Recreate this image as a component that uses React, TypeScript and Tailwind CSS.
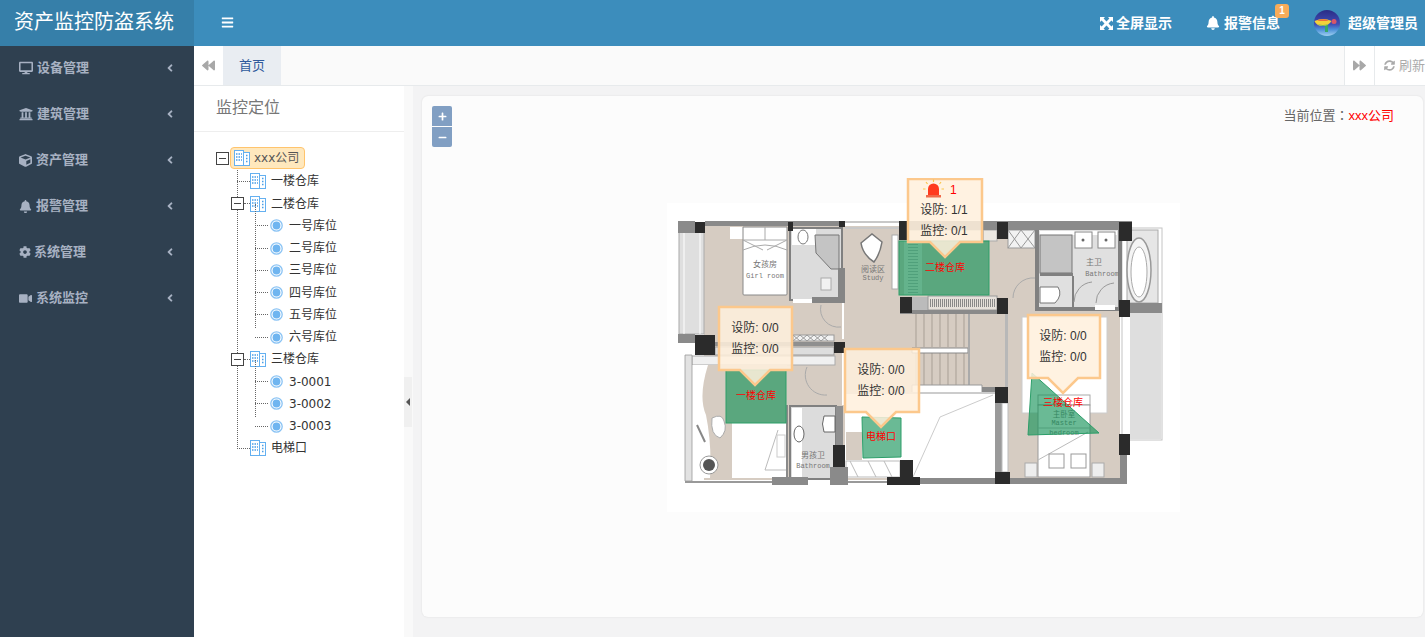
import { FaAngleLeft, FaBackward, FaBars, FaBell, FaCog, FaCube, FaDesktop, FaForward, FaMinus, FaPlus, FaSyncAlt, FaUniversity, FaVideo } from 'react-icons/fa';

const menu = [
  { label: '设备管理', icon: <FaDesktop className="w-[14px] h-[14px]" />, gap: 'ml-[4px]' },
  { label: '建筑管理', icon: <FaUniversity className="w-[14px] h-[14px]" />, gap: 'ml-[4px]' },
  { label: '资产管理', icon: <FaCube className="w-[13px] h-[13px]" />, gap: 'ml-[4px]' },
  { label: '报警管理', icon: <FaBell className="w-[13px] h-[13px]" />, gap: 'ml-[4px]' },
  { label: '系统管理', icon: <FaCog className="w-[12px] h-[12px]" />, gap: 'ml-[3px]' },
  { label: '系统监控', icon: <FaVideo className="w-[13px] h-[13px]" />, gap: 'ml-[4px]' },
];

function BuildingIcon() {
  return (
    <svg width="16" height="16" viewBox="0 0 16 16" fill="none" className="shrink-0">
      <rect x="0.5" y="0.5" width="9" height="15" fill="#fff" stroke="#64b0f0" />
      <rect x="9.5" y="2.5" width="6" height="13" fill="#fff" stroke="#64b0f0" />
      <path d="M2 4h1.500M4.500 4H6M7 4h1M2 7h1.500M4.500 7H6M7 7h1M2 10h1.500M4.500 10H6M7 10h1M12 5.500h1.500M12 8.500h1.500M12 11.500h1.500" stroke="#4a9fe8" strokeWidth="1.500" />
    </svg>
  );
}

function RadioIcon() {
  return (
    <svg width="13" height="13" viewBox="0 0 13 13" className="shrink-0">
      <circle cx="6.500" cy="6.500" r="5.700" fill="#fff" stroke="#8ac3f4" strokeWidth="1.300" />
      <circle cx="6.500" cy="6.500" r="3.900" fill="#6fb5f0" />
    </svg>
  );
}

function SwitchBox({ className }: { className: string }) {
  return (
    <span className={`relative z-10 flex items-center justify-center w-[13px] h-[13px] border border-[#444] bg-white shrink-0 ${className}`}>
      <span className="w-[7px] h-px bg-[#444]" />
    </span>
  );
}

function Leaf({ label }: { label: string }) {
  return (
    <li className="flex items-center h-[22.25px] pl-[39px]">
      <span className="w-[13px] border-t border-dotted border-[#666] mr-[2px]" />
      <RadioIcon />
      <span className="ml-[6px] text-[#333]">{label}</span>
    </li>
  );
}

function Floor({ label, open, children, lineClass }: { label: string; open?: boolean; children?: React.ReactNode; lineClass?: string }) {
  return (
    <li>
      <div className="flex items-center h-[22.25px] pl-[21px]">
        {open ? (
          <>
            <SwitchBox className="-ml-[6px]" />
            <span className="w-[6px] border-t border-dotted border-[#666]" />
          </>
        ) : (
          <span className="w-[13px] border-t border-dotted border-[#666]" />
        )}
        <BuildingIcon />
        <span className="ml-[5px] text-[#333]">{label}</span>
      </div>
      {children && (
        <ul className="relative">
          <span className={`absolute left-[39px] -top-[11px] border-l border-dotted border-[#666] ${lineClass}`} />
          {children}
        </ul>
      )}
    </li>
  );
}

function Tree() {
  return (
    <div className="pl-[22px] pt-[15px] text-[12px] font-['DejaVu_Sans','Noto_Sans_CJK_SC',sans-serif]">
      <div className="flex items-start h-[23.25px]">
        <SwitchBox className="mr-px mt-[5px]" />
        <div className="flex items-center h-[22px] w-[75px] pl-[3px] rounded-[4px] border border-[#ffc46d] bg-[#ffe8bd]">
          <BuildingIcon />
          <span className="ml-[4px] text-[#555]">xxx公司</span>
        </div>
      </div>
      <ul className="relative">
        <span className="absolute left-[21px] top-0 h-[279px] border-l border-dotted border-[#666]" />
        <Floor label="一楼仓库" />
        <Floor label="二楼仓库" open lineClass="h-[124px]">
          {['一号库位', '二号库位', '三号库位', '四号库位', '五号库位', '六号库位'].map((name) => (
            <Leaf key={name} label={name} />
          ))}
        </Floor>
        <Floor label="三楼仓库" open lineClass="h-[57px]">
          {['3-0001', '3-0002', '3-0003'].map((name) => (
            <Leaf key={name} label={name} />
          ))}
        </Floor>
        <Floor label="电梯口" />
      </ul>
    </div>
  );
}

const pillars = [
  [695, 222, 10, 11], [788, 222, 5, 9], [839, 221, 6, 6], [899, 221, 8, 19], [997, 222, 11, 17], [1119, 222, 13, 19],
  [900, 297, 12, 16], [997, 298, 11, 16], [1119, 300, 11, 17], [695, 335, 20, 20], [834, 342, 11, 11], [833, 445, 12, 22],
  [900, 460, 13, 24], [887, 477, 33, 8], [995, 387, 13, 16], [995, 472, 15, 12], [1119, 434, 11, 21],
];

function FloorPlan() {
  return (
    <svg viewBox="667 178 513 334" className="w-[513px] h-[334px]">
      <rect x="667" y="203" width="513" height="309" fill="#fff" />
      {/* floors */}
      <rect x="704" y="226" width="416" height="254" fill="#d6ccc2" />
      {/* balconies */}
      <rect x="679" y="232" width="25" height="102" fill="#dfdfdf" stroke="#aaa" />
      <path d="M684 232v102M700 232v102" stroke="#fff" />
      <rect x="1122" y="228" width="40" height="212" fill="#fff" stroke="#c4c4c4" />
      <rect x="1130" y="313" width="31" height="126" fill="#dedede" />
      <rect x="1127" y="230" width="31" height="73" fill="#e6e6e6" stroke="#aaa" />
      <ellipse cx="1139" cy="270" rx="12" ry="32" fill="#f4f4f4" stroke="#999" strokeWidth="1.500" />
      <ellipse cx="1139" cy="272" rx="8" ry="25" fill="#fff" stroke="#aaa" />
      {/* girl room */}
      <rect x="730" y="227" width="13" height="12" fill="#fff" />
      <path d="M743 227h44v67q0 1-1 1h-42q-1 0-1-1z" fill="#fff" stroke="#888" />
      <path d="M743 240h44M765 227v13M743 250q22-10 44 0M743 240l20 10M787 240l-20 10" fill="none" stroke="#aaa" />
      <text x="765" y="267" fontSize="8" textAnchor="middle" fill="#777">女孩房</text>
      <text x="765" y="278" fontSize="7" textAnchor="middle" fill="#777" fontFamily="Liberation Mono">Girl room</text>
      {/* girl bath */}
      <rect x="790" y="228" width="52" height="72" fill="#dcdcdc" stroke="#808080" strokeWidth="2" />
      <rect x="792" y="229" width="24" height="16" fill="#fff" />
      <ellipse cx="803" cy="237" rx="5" ry="7" fill="#fff" stroke="#777" />
      <path d="M815 235h24v34h-8l-15-16z" fill="#c4c4c4" stroke="#777" />
      <rect x="821" y="278" width="10" height="12" fill="#f2f2f2" stroke="#aaa" />
      <rect x="793" y="299" width="23" height="4" fill="#fff" />
      <path d="M838 268h7v34h-7zM812 297h33v6h-33z" fill="#858585" />
      <path d="M843 303v36" stroke="#fff" strokeWidth="2" />
      <path d="M821 305a18 18 0 0 0 20 22" fill="none" stroke="#aaa" />
      {/* study */}
      <path d="M861 243l11-9 10 8q-2 12-8 20q-11-7-13-19z" fill="#fff" stroke="#777" strokeWidth="1.500" />
      <text x="873" y="272" fontSize="8" textAnchor="middle" fill="#777">阅读区</text>
      <text x="873" y="280" fontSize="7" textAnchor="middle" fill="#777" fontFamily="Liberation Mono">Study</text>
      <rect x="892" y="235" width="6" height="54" fill="#fff" stroke="#aaa" />
      {/* green room furniture */}
      <rect x="904" y="241" width="18" height="54" fill="#f0ece6" />
      <path d="M913 241v54" stroke="#bbb" strokeWidth="10" strokeDasharray="1 2" />
      <rect x="912" y="297" width="16" height="13" fill="#bbb" />
      <rect x="928" y="296" width="69" height="14" fill="#e5e0da" stroke="#999" />
      <path d="M930 303h65" stroke="#888" strokeWidth="8" strokeDasharray="1 1" />
      <path d="M900 310h105v4H900z" fill="#8a8a8a" />
      <rect x="983" y="230" width="14" height="11" fill="#ece8e2" stroke="#aaa" />
      <rect x="908" y="230" width="75" height="11" fill="#ece8e2" stroke="#aaa" />
      {/* closet */}
      <rect x="1008" y="230" width="27" height="18" fill="#f2f2f2" stroke="#999" />
      <path d="M1008 230l13 18M1021 230l-13 18M1021 230l14 18M1035 230l-14 18" stroke="#999" />
      <path d="M1013 298a20 20 0 0 1 22-20" fill="none" stroke="#aaa" />
      {/* master bath */}
      <rect x="1037" y="228" width="83" height="81" fill="#e0e0e0" stroke="#808080" strokeWidth="4" />
      <rect x="1040" y="231" width="77" height="4" fill="#fff" />
      <rect x="1040" y="235" width="32" height="38" fill="#c4c4c4" stroke="#777" />
      <rect x="1040" y="273" width="33" height="3" fill="#808080" />
      <rect x="1072" y="276" width="2" height="31" fill="#808080" />
      <rect x="1075" y="232" width="17" height="16" fill="#fff" stroke="#888" />
      <rect x="1098" y="232" width="17" height="16" fill="#fff" stroke="#888" />
      <circle cx="1083" cy="240" r="1.500" fill="#666" />
      <circle cx="1106" cy="240" r="1.500" fill="#666" />
      <text x="1094" y="265" fontSize="8" textAnchor="middle" fill="#777">主卫</text>
      <text x="1102" y="276" fontSize="7" textAnchor="middle" fill="#777" fontFamily="Liberation Mono">Bathroom</text>
      <path d="M1040 287h18q5 8-3 16h-15z" fill="#fff" stroke="#777" />
      <path d="M1095 305h20v5h-20z" fill="#fff" />
      <path d="M1074 302a20 20 0 0 1 18-20M1096 303a20 20 0 0 1 18-20" fill="none" stroke="#999" />
      {/* stairs */}
      <path d="M916 314v33M924 314v33M932 314v33M940 314v33M948 314v33M956 314v33M964 314v33M916 353v32M924 353v32M932 353v32M940 353v32M948 353v32M956 353v32M964 353v32" stroke="#a89f95" />
      <path d="M912 348h56v5h-56z" fill="#fff" stroke="#888" />
      <path d="M968 314h2v71h-2z" fill="#aaa" />
      <path d="M912 385h70v10h-70z" fill="#fff" stroke="#999" />
      <rect x="982" y="387" width="14" height="8" fill="#8a8a8a" />
      <rect x="1005" y="314" width="3" height="73" fill="#b8b8b8" />
      {/* mid walls */}
      <rect x="793" y="335" width="41" height="6" fill="#f2f2f2" stroke="#999" />
      <path d="M793 335l7 6M800 335l-7 6M800 335l7 6M807 335l-7 6M807 335l7 6M814 335l-7 6M814 335l7 6M821 335l-7 6M821 335l7 6M828 335l-7 6" stroke="#999" />
      <path d="M715 342h119v4H715z" fill="#8f8f8f" />
      <rect x="715" y="347" width="119" height="8" fill="#ddd" stroke="#999" />
      <rect x="692" y="356" width="143" height="9" fill="#f0f0f0" stroke="#aaa" />
      <path d="M807 367a20 20 0 0 0 20 28" fill="none" stroke="#aaa" />
      <path d="M843 353v52" stroke="#fff" strokeWidth="2" />
      {/* boy room */}
      <rect x="692" y="365" width="95" height="113" fill="#fff" />
      <path d="M708 365q-10 32-2 50q6 30 4 63h22v-55h55v-58z" fill="#d6ccc2" />
      <circle cx="709" cy="465" r="9" fill="#fff" stroke="#999" />
      <circle cx="709" cy="465" r="6" fill="#555" />
      <path d="M712 418q10-5 12 3q4 10-4 17q-10-3-8-20z" fill="#fff" stroke="#aaa" />
      <path d="M697 425l8 17" stroke="#888" strokeWidth="2" />
      <path d="M778 430l-13 40h22" fill="none" stroke="#bbb" />
      <rect x="777" y="435" width="8" height="22" fill="none" stroke="#ccc" />
      <rect x="786" y="405" width="2" height="72" fill="#8a8a8a" />
      {/* boy bath */}
      <rect x="790" y="406" width="46" height="73" fill="#dcdcdc" stroke="#808080" strokeWidth="2" />
      <rect x="792" y="408" width="10" height="69" fill="#fff" />
      <ellipse cx="799" cy="434" rx="5" ry="8" fill="#fff" stroke="#666" />
      <path d="M824 416h11v16h-11q-3-8 0-16z" fill="#fff" stroke="#666" />
      <text x="813" y="458" fontSize="8" textAnchor="middle" fill="#777">男孩卫</text>
      <text x="813" y="468" fontSize="7" textAnchor="middle" fill="#777" fontFamily="Liberation Mono">Bathroom</text>
      <rect x="836" y="406" width="7" height="40" fill="#8f8f8f" />
      {/* learning */}
      <rect x="845" y="392" width="55" height="86" fill="#fff" />
      <rect x="900" y="392" width="95" height="86" fill="#fff" />
      <path d="M845 393h150" stroke="#999" />
      <path d="M913 477l27-60 53-22" fill="none" stroke="#ccc" />
      <rect x="846" y="432" width="16" height="28" fill="#d6ccc2" />
      <rect x="846" y="461" width="54" height="16" fill="#fff" stroke="#bbb" />
      <path d="M850 461l8 16M868 461l8 16M884 461l8 16" stroke="#bbb" />
      <rect x="995" y="400" width="7" height="72" fill="#9a9a9a" />
      <rect x="1002" y="403" width="6" height="69" fill="#fff" stroke="#bbb" />
      {/* master room */}
      <rect x="1022" y="317" width="85" height="96" fill="#fff" stroke="#ccc" />
      <rect x="1038" y="395" width="52" height="10" fill="#fff" stroke="#aaa" />
      <rect x="1038" y="405" width="52" height="72" fill="#fff" stroke="#999" />
      <path d="M1038 428h52M1038 460l50-28" stroke="#bbb" fill="none" />
      <rect x="1049" y="454" width="15" height="14" fill="#fff" stroke="#999" />
      <rect x="1071" y="454" width="15" height="14" fill="#fff" stroke="#999" />
      <rect x="1025" y="463" width="12" height="14" fill="#eee" stroke="#aaa" />
      <rect x="1092" y="463" width="12" height="14" fill="#eee" stroke="#aaa" />
      <text x="1064" y="417" fontSize="7.500" textAnchor="middle" fill="#777">主卧室</text>
      <text x="1064" y="425" fontSize="7" textAnchor="middle" fill="#777" fontFamily="Liberation Mono">Master</text>
      <text x="1064" y="435" fontSize="7" textAnchor="middle" fill="#777" fontFamily="Liberation Mono">bedroom</text>
      {/* outer walls */}
      <path d="M685 355h7v126h-7z" fill="#e2e2e2" stroke="#999" strokeWidth="0.800" />
      <path d="M685 481h90v2h-90zM847 481h40v2h-40z" fill="#999" />
      <path d="M845 221h54v2h-54zM845 227h54v2h-54z" fill="#c8c8c8" />
      <path d="M678 221h17v12h-17zM705 221h134v5h-134zM907 221h225v9H907zM678 334h17v9h-17zM772 477h36v8h-36zM830 467h18v18h-18zM913 478h82v6h-82zM1010 478h117v6h-117zM1120 440h7v44h-7zM1119 303h43v10h-43z" fill="#8a8a8a" />
      {pillars.map(([x, y, w, h]) => (
        <rect key={`${x}-${y}`} x={x} y={y} width={w} height={h} fill="#2b2b2b" />
      ))}
      {/* alarm zones */}
      <g fill="#0f9054" fillOpacity="0.62" stroke="#2c9e69">
        <rect x="899" y="241" width="90" height="54" />
        <rect x="726" y="370" width="60" height="53" />
        <polygon points="862,417 901,418 901,457 863,458" />
        <polygon points="1032,373 1099,433 1028,435" />
      </g>
      {/* bubbles */}
      <g fill="#fff0dc" fillOpacity="0.86" stroke="#fcc88c" strokeWidth="2.500">
        <path d="M908 179h74v63h-22l-15 15-15-15h-22z" />
        <path d="M719 307h73v63h-22l-15 15-15-15h-21z" />
        <path d="M845 349h74v63h-23l-15 15-15-15h-21z" />
        <path d="M1028 315h72v63h-22l-15 15-15-15h-20z" />
      </g>
      {/* alarm lamp */}
      <path d="M928 195v-6a5.500 5.500 0 0 1 11 0v6z" fill="#ff3b1f" />
      <rect x="926" y="195" width="15" height="2.500" fill="#f06a4a" />
      <path d="M933.500 179.500v2.500M926 182l1.500 2M941 182l-1.500 2M923 189h2.500M944 189h-2.500" stroke="#fbc64d" strokeWidth="1.200" />
    </svg>
  );
}

function Bubble({ className, lines }: { className: string; lines: string[] }) {
  return (
    <div className={`absolute w-[76px] flex flex-col items-center text-[12px] leading-[21px] text-[#333] ${className}`}>
      {lines.map((line) => (
        <span key={line}>{line}</span>
      ))}
    </div>
  );
}

export default function App() {
  return (
    <div className="flex flex-col w-[1425px] h-[637px] overflow-hidden bg-[#f3f3f4] font-['Liberation_Sans','Noto_Sans_CJK_SC',sans-serif]">
      {/* Header */}
      <header className="flex h-[46px] shrink-0 bg-[#3c8dbc] text-white">
        <div className="flex items-center w-[194px] pl-[14px] bg-[#367fa9] text-[20px] leading-none pb-[2px]">资产监控防盗系统</div>
        <button className="ml-[27px] pb-[1px]">
          <FaBars className="w-[13px] h-[13px]" />
        </button>
        <div className="ml-auto flex items-center text-[14px] font-bold">
          <span className="flex items-center mr-[34px]">
            <svg width="13" height="13" viewBox="0 0 13 13" fill="#fff" className="mr-[3px]">
              <path d="M0 0h5L3.600 1.600 6.500 4.500 9.400 1.600 8 0h5v5l-1.600-1.400L8.500 6.500l2.900 2.900L13 8v5H8l1.400-1.600-2.900-2.900-2.900 2.900L5 13H0V8l1.600 1.400 2.900-2.900-2.900-2.900L0 5z" />
            </svg>
            全屏显示
          </span>
          <span className="relative flex items-center mr-[34px]">
            <FaBell className="w-[14px] h-[14px] mr-[4px]" />
            报警信息
            <span className="absolute -right-[9px] -top-[9px] flex items-center justify-center w-[14px] h-[14px] rounded-[3px] bg-[#f8ac59] text-[10px] leading-none">1</span>
          </span>
          <svg width="26" height="26" viewBox="0 0 26 26" className="mr-[8px]">
            <defs>
              <linearGradient id="avatarSky" x1="0" y1="0" x2="0" y2="1">
                <stop offset="0" stopColor="#2b2c86" />
                <stop offset="0.55" stopColor="#3f4fb5" />
                <stop offset="0.75" stopColor="#4d90d8" />
                <stop offset="1" stopColor="#9fd0f0" />
              </linearGradient>
            </defs>
            <circle cx="13" cy="13" r="13" fill="url(#avatarSky)" />
            <path d="M11 15v7h3v-7z" fill="#35a86a" />
            <path d="M0.500 11q9-4 17 0q-3 5-9 5q-6 0-8-5z" fill="#f3d23a" />
            <path d="M3 10.500q6-2.500 12 0q-6 1-12 0z" fill="#ee6d3a" />
            <path d="M3 14q6 2 12 0q-6 3.500-12 0z" fill="#46b06e" />
            <circle cx="20" cy="11.500" r="2.500" fill="#d8556a" />
          </svg>
          <span className="mr-[7px]">超级管理员</span>
        </div>
      </header>

      <div className="flex flex-1 min-h-0">
        {/* Sidebar */}
        <nav className="w-[194px] shrink-0 bg-[#2f4050] text-[#a7b1c2]">
          {menu.map((item) => (
            <div key={item.label} className="flex items-center h-[46px] pl-[19px] pr-[19px] pb-[2px] text-[13px] font-bold">
              {item.icon}
              <span className={item.gap}>{item.label}</span>
              <FaAngleLeft className="ml-auto w-[10px] h-[12px]" />
            </div>
          ))}
        </nav>

        <div className="flex flex-col flex-1 min-w-0">
          {/* Tabs */}
          <div className="flex h-[40px] shrink-0 bg-[#fafafa] border-b border-[#e7eaec] text-[13px]">
            <button className="flex items-center justify-center w-[29px] bg-white text-[#a8a8a8]">
              <FaBackward className="w-[13px] h-[13px]" />
            </button>
            <div className="flex items-center justify-center w-[58px] bg-[#e9edf2] text-[#2f5a9c]">首页</div>
            <button className="ml-auto flex items-center justify-center w-[30px] bg-white border-l border-[#e7eaec] text-[#a8a8a8]">
              <FaForward className="w-[13px] h-[13px]" />
            </button>
            <div className="flex items-center w-[51px] pl-[9px] bg-white border-l border-[#e7eaec] text-[13px] text-[#aaaaaa] whitespace-nowrap overflow-hidden">
              <FaSyncAlt className="w-[11px] h-[11px] mr-[4px] shrink-0" />
              刷新
            </div>
          </div>

          <div className="flex flex-1 min-h-0">
            {/* Tree panel */}
            <aside className="w-[210px] shrink-0 bg-white">
              <div className="flex items-center h-[46px] pl-[22px] pb-[1px] border-b border-[#eeeeee] text-[16px] text-[#777]">监控定位</div>
              <Tree />
            </aside>
            <div className="flex items-center w-[9px] shrink-0 bg-[#f9f9f9]">
              <div className="flex items-center justify-center w-[8px] h-[50px] mt-[80px] bg-[#f0f0f0]">
                <span className="w-0 h-0 border-y-[4px] border-y-transparent border-r-[4px] border-r-[#555]" />
              </div>
            </div>

            {/* Map */}
            <main className="flex-1 min-w-0 pl-[9px] pr-[2px] pt-[10px] pb-[20px]">
              <div className="relative h-full rounded-[6px] bg-[#fcfcfc] shadow-[0_0_2px_rgba(0,0,0,0.1)]">
                <div className="absolute left-[10px] top-[10px] flex flex-col gap-px text-white">
                  <button className="flex items-center justify-center w-[20px] h-[20px] rounded-t-[2px] bg-[#819fc3]">
                    <FaPlus className="w-[9px] h-[9px]" />
                  </button>
                  <button className="flex items-center justify-center w-[20px] h-[20px] rounded-b-[2px] bg-[#819fc3]">
                    <FaMinus className="w-[9px] h-[9px]" />
                  </button>
                </div>
                <div className="absolute right-[29px] top-[9px] text-[13px] text-[#666]">
                  当前位置<span className="font-['Noto_Sans_CJK_TC']">：</span><span className="text-[#ff0000]">xxx公司</span>
                </div>

                <div className="absolute left-[245px] top-[82px] w-[513px] h-[334px]">
                  <FloorPlan />
                  <span className="absolute left-[283px] top-[4px] text-[12px] leading-[16px] text-[#ff0000]">1</span>
                  <Bubble className="left-[239px] top-[22px]" lines={['设防: 1/1', '监控: 0/1']} />
                  <Bubble className="left-[50px] top-[140px]" lines={['设防: 0/0', '监控: 0/0']} />
                  <Bubble className="left-[176px] top-[182px]" lines={['设防: 0/0', '监控: 0/0']} />
                  <Bubble className="left-[358px] top-[148px]" lines={['设防: 0/0', '监控: 0/0']} />
                  <span className="absolute left-[258px] top-[84px] text-[10px] leading-[12px] text-[#ff0000]">二楼仓库</span>
                  <span className="absolute left-[69px] top-[212px] text-[10px] leading-[12px] text-[#ff0000]">一楼仓库</span>
                  <span className="absolute left-[199px] top-[253px] text-[10px] leading-[12px] text-[#ff0000]">电梯口</span>
                  <span className="absolute left-[376px] top-[219px] text-[10px] leading-[12px] text-[#ff0000]">三楼仓库</span>
                </div>
              </div>
            </main>
          </div>
        </div>
      </div>
    </div>
  );
}
